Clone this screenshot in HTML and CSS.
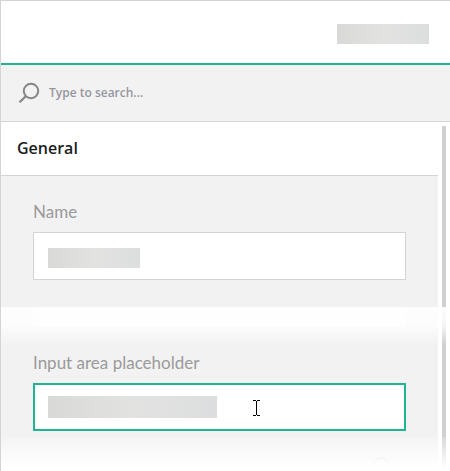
FILE: index.html
```html
<!DOCTYPE html>
<html>
<head>
    <title>Form editor</title>
    <link rel="stylesheet" href="styles.css">
</head>
<body>
    <div class="panel">
        <div class="top-bar">
            <div class="blur blur-top"></div>
        </div>
        <div class="search-bar">
            <svg class="search-icon" width="24" height="24" viewBox="0 0 24 24">
                <circle cx="13" cy="10" r="7.2" fill="none" stroke="#858585" stroke-width="2"/>
                <path d="M7.8 15.2 L1.5 21.2" fill="none" stroke="#858585" stroke-width="2.2"/>
            </svg>
            <span class="search-text">Type to search...</span>
        </div>
        <div class="content">
            <div class="sections">
                <div class="section-title">General</div>
                <div class="fields">
                    <div class="field field-name">
                        <div class="field-label">Name</div>
                        <div class="field-input">
                            <div class="blur blur-name"></div>
                        </div>
                    </div>
                    <div class="field field-area">
                        <div class="field-label">Input area placeholder</div>
                        <div class="field-input field-active">
                            <div class="blur blur-area"></div>
                            <svg class="cursor" width="7" height="16" viewBox="0 0 7 16">
                                <path d="M0 .5H3M4 .5H7M0 15.5H3M4 15.5H7M3.5 1V15" fill="none" stroke="#000" stroke-width="1"/>
                            </svg>
                        </div>
                    </div>
                </div>
            </div>
            <div class="scrollbar"></div>
            <div class="next-button"></div>
            <div class="fade fade-mid">
                <div class="hidden-input"></div>
            </div>
            <div class="fade fade-bottom"></div>
        </div>
    </div>
</body>
</html>
```

FILE: styles.css
```css
body {
    margin: 0;
    background-color: #fff;
    font-family: "Open Sans", sans-serif;
}
.panel {
    width: 449px;
    height: 470px;
    border-top: 1px solid #d4d4d4;
    border-left: 1px solid #d4d4d4;
    overflow: hidden;
}
.top-bar {
    height: 62px;
    display: flex;
    justify-content: flex-end;
    align-items: center;
    padding-right: 21px;
    background-color: #fff;
    border-bottom: 2px solid #1fb494;
}
.blur {
    background: linear-gradient(90deg, #d9d9d7, #e2e3e1 50%, #dcddde);
}
.blur-top {
    width: 92px;
    height: 20px;
    margin-top: 4px;
}
.search-bar {
    height: 56px;
    display: flex;
    align-items: center;
    padding-left: 17px;
    gap: 7px;
    background-color: #f2f2f2;
    border-bottom: 1px solid #d4d4d4;
}
.search-text {
    font-size: 12px;
    font-weight: 600;
    color: #9597a0;
    margin-bottom: 2px;
}
.content {
    position: relative;
    height: 349px;
    display: flex;
}
.sections {
    width: 437px;
}
.section-title {
    height: 53px;
    line-height: 53px;
    padding-left: 16px;
    font-size: 16px;
    font-weight: 600;
    color: #1a1d21;
    border-bottom: 1px solid #d4d4d4;
}
.fields {
    height: 295px;
    padding: 26px 32px 0;
    background-color: #f2f2f2;
}
.field-label {
    font-family: Lato, sans-serif;
    font-size: 17px;
    line-height: 20px;
    color: #9a9a9a;
    margin-bottom: 10px;
}
.field-input {
    box-sizing: border-box;
    width: 373px;
    height: 48px;
    display: flex;
    align-items: center;
    padding-left: 14px;
    background-color: #fff;
    border: 1px solid #d4d4d4;
}
.field-area {
    margin-top: 73px;
}
.field-active {
    border: 2px solid #1fb494;
    padding-left: 13px;
}
.blur-name {
    width: 92px;
    height: 20px;
    margin-top: 4px;
}
.blur-area {
    width: 169px;
    height: 22px;
}
.cursor {
    margin-left: 36px;
    margin-top: 2px;
}
.scrollbar {
    width: 4px;
    height: 349px;
    margin: 4px 0 0 4px;
    background-color: #d0d0d0;
    border-radius: 1px 1px 0 0;
}
.next-button {
    position: absolute;
    left: 371px;
    top: 335px;
    width: 14px;
    height: 14px;
    border: 2px solid #d8d8d8;
    border-radius: 50%;
}
.fade {
    position: absolute;
    left: 0;
    right: 0;
}
.fade-mid {
    top: 185px;
    height: 38px;
    background: linear-gradient(rgba(255, 255, 255, .92), rgba(255, 255, 255, .78) 50%, rgba(255, 255, 255, 0));
}
.hidden-input {
    width: 373px;
    height: 20px;
    margin-left: 32px;
    background-color: rgba(255, 255, 255, .5);
}
.fade-bottom {
    top: 315px;
    height: 34px;
    background: linear-gradient(rgba(255, 255, 255, .2), #fff 90%);
}
```
